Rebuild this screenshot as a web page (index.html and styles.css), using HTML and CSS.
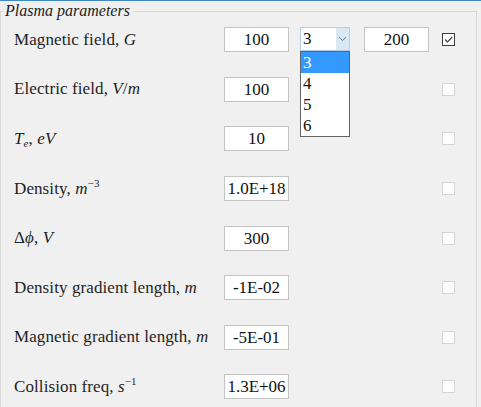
FILE: index.html
```html
<!DOCTYPE html>
<html>
<head>
<meta charset="utf-8">
<link rel="stylesheet" href="styles.css">
</head>
<body>
<fieldset class="group">
  <legend>Plasma parameters</legend>
  <div class="rows">
    <div class="row">
      <span class="label">Magnetic field, <i>G</i></span>
      <span class="field">100</span>
      <div class="combo">
        <span class="combo-value">3</span>
        <span class="combo-arrow"><svg width="9" height="6" viewBox="0 0 9 6"><path d="M1 1.2 L4.5 4.6 L8 1.2" fill="none" stroke="#6d7a88" stroke-width="1"/></svg></span>
        <ul class="dropdown">
          <li class="selected">3</li>
          <li>4</li>
          <li>5</li>
          <li>6</li>
        </ul>
      </div>
      <span class="field">200</span>
      <span class="check checked"><svg width="11" height="11" viewBox="0 0 11 11"><path d="M2 5.5 L4.5 8 L9.2 3" fill="none" stroke="#3a3a3a" stroke-width="1.1"/></svg></span>
    </div>
    <div class="row">
      <span class="label">Electric field, <i>V</i>/<i>m</i></span>
      <span class="field">100</span>
      <span></span><span></span>
      <span class="check"></span>
    </div>
    <div class="row">
      <span class="label"><i>T</i><sub><i>e</i></sub>, <i>eV</i></span>
      <span class="field">10</span>
      <span></span><span></span>
      <span class="check"></span>
    </div>
    <div class="row">
      <span class="label">Density, <i>m</i><sup>−3</sup></span>
      <span class="field">1.0E+18</span>
      <span></span><span></span>
      <span class="check"></span>
    </div>
    <div class="row">
      <span class="label">Δ<i>ϕ</i>, <i>V</i></span>
      <span class="field">300</span>
      <span></span><span></span>
      <span class="check"></span>
    </div>
    <div class="row">
      <span class="label">Density gradient length, <i>m</i></span>
      <span class="field">-1E-02</span>
      <span></span><span></span>
      <span class="check"></span>
    </div>
    <div class="row">
      <span class="label">Magnetic gradient length, <i>m</i></span>
      <span class="field">-5E-01</span>
      <span></span><span></span>
      <span class="check"></span>
    </div>
    <div class="row">
      <span class="label">Collision freq, <i>s</i><sup>−1</sup></span>
      <span class="field">1.3E+06</span>
      <span></span><span></span>
      <span class="check"></span>
    </div>
  </div>
</fieldset>
</body>
</html>
```
FILE: styles.css
```css
html, body {
  margin: 0;
  padding: 0;
  background: #f0f0f0;
}
body {
  border-top: 1px solid #3f88c5;
  height: 406px;
  overflow: hidden;
  font-family: "Liberation Serif", "Times New Roman", serif;
  color: #1f1f1f;
}
.group {
  margin: 0;
  padding: 0;
  width: 477px;
  box-sizing: border-box;
  border: 1px solid #d9d9d9;
  min-width: 0;
}
.group legend {
  font-style: italic;
  font-size: 16px;
  line-height: 20px;
  margin-left: 3px;
  padding: 0 3px 0 1px;
  color: #222;
}
.rows {
  margin-top: -6px;
}
.row {
  height: 49.6px;
  display: grid;
  grid-template-columns: 210px 76px 64px 78px 13px;
  align-items: center;
  padding-left: 13px;
}
.label {
  font-size: 17px;
  letter-spacing: 0.1px;
  white-space: nowrap;
}
.label sub, .label sup {
  font-size: 11px;
  line-height: 0;
}
.label sub { vertical-align: -3px; }
.label sup { vertical-align: 7px; }
.field {
  width: 65px;
  height: 25px;
  box-sizing: border-box;
  border: 1px solid #c4c4c4;
  background: #fff;
  font-size: 17px;
  line-height: 23px;
  text-align: center;
  color: #111;
  white-space: nowrap;
}
.combo {
  position: relative;
  width: 50px;
  height: 24px;
  box-sizing: border-box;
  border: 1px solid #b4cde2;
  background: #fff;
  display: flex;
  margin-top: -2px;
}
.combo-value {
  flex: 1;
  font-size: 17px;
  line-height: 22px;
  padding-left: 2px;
  color: #111;
}
.combo-arrow {
  width: 13px;
  background: #d9e8f5;
  display: flex;
  align-items: center;
  justify-content: center;
}
.dropdown {
  position: absolute;
  left: -1px;
  top: 23px;
  width: 50px;
  box-sizing: border-box;
  margin: 0;
  padding: 0;
  list-style: none;
  background: #fff;
  border: 1px solid #646464;
  z-index: 5;
}
.dropdown li {
  height: 21px;
  line-height: 21px;
  font-size: 17px;
  padding-left: 2px;
  color: #111;
}
.dropdown li.selected {
  background: #3399ff;
  color: #fff;
}
.check {
  width: 13px;
  height: 13px;
  box-sizing: border-box;
  border: 1px solid #d6d6d6;
  background: #fcfcfc;
  display: flex;
  align-items: center;
  justify-content: center;
}
.check.checked {
  border-color: #3c3c3c;
  background: #fff;
  margin-top: -1px;
}
```
